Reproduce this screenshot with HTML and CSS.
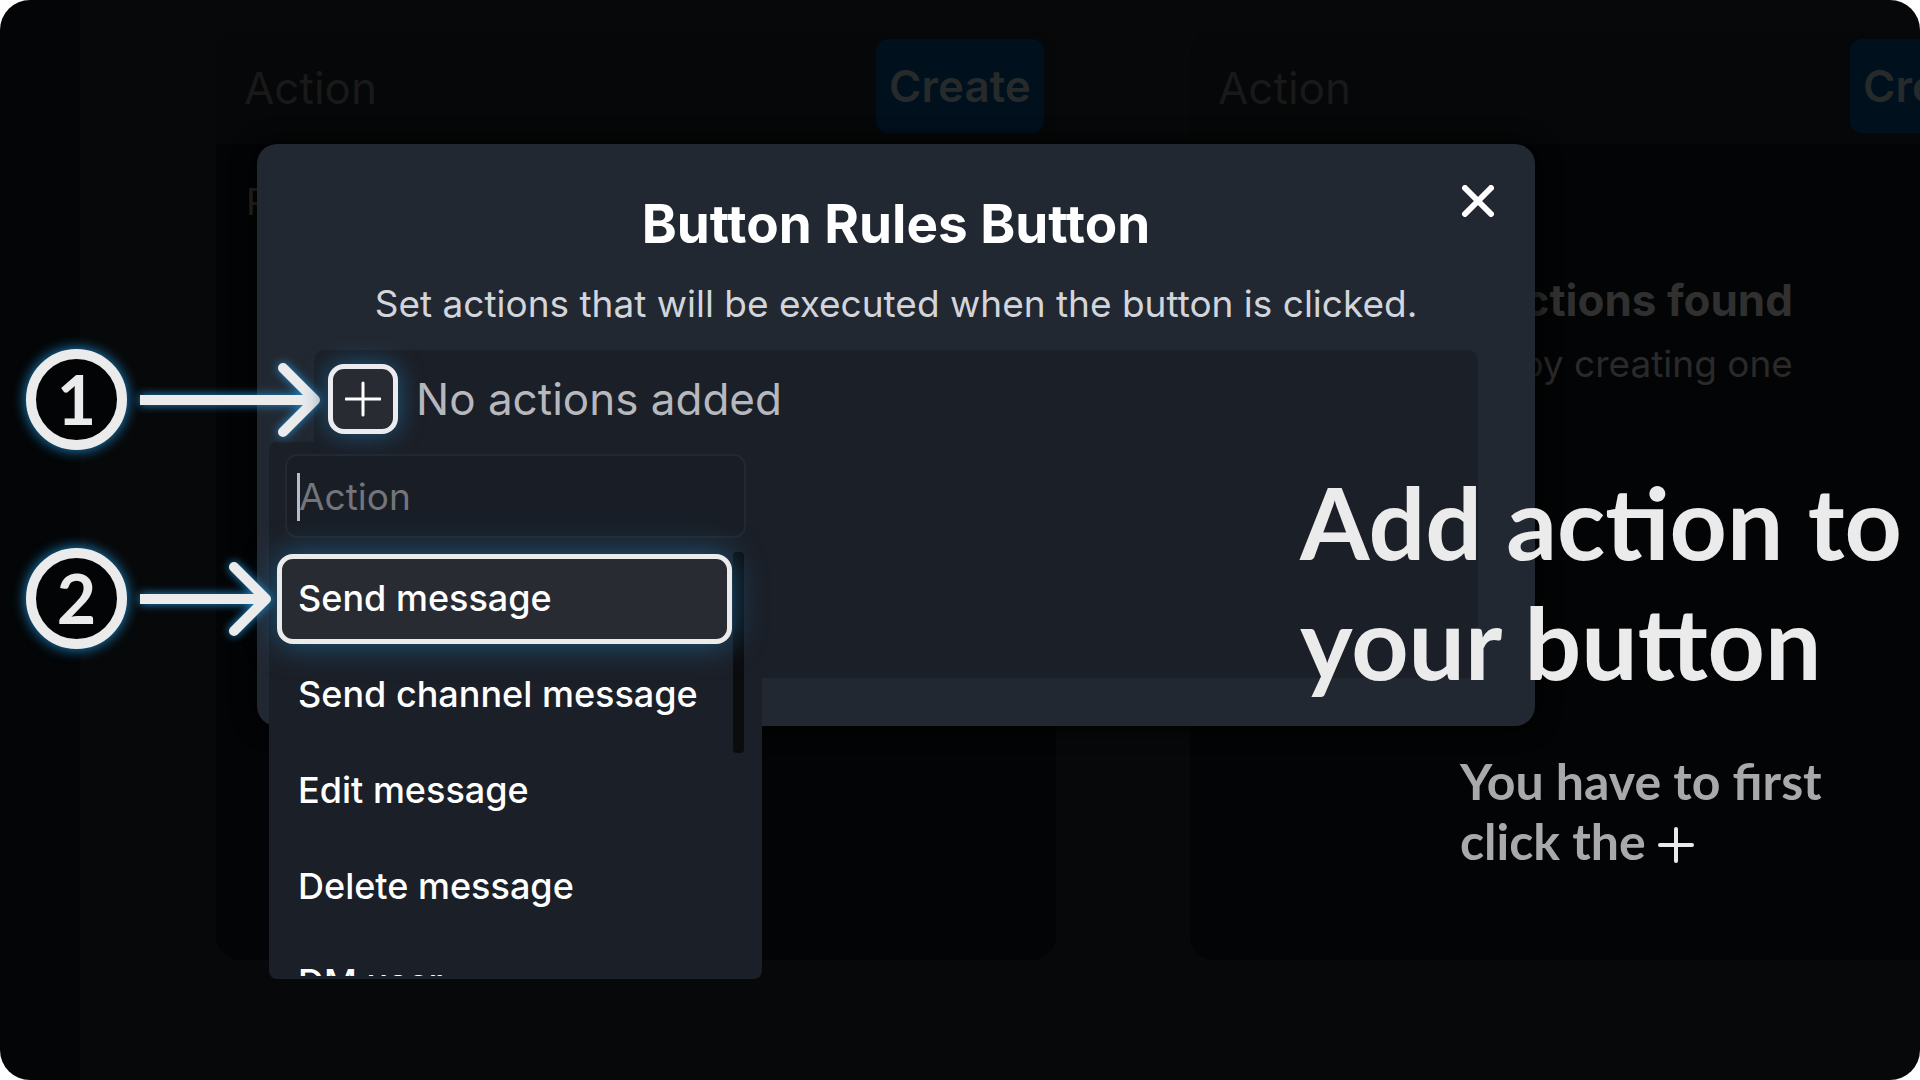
FILE: index.html
```html
<!DOCTYPE html>
<html lang="en">
<head>
    <meta charset="UTF-8">
    <meta name="viewport" content="width=device-width, initial-scale=1.0">
    <title>Add action to your button</title>
    <link rel="stylesheet" href="styles.css">
</head>
<body>
    <div class="stage">
        <!-- dimmed page behind the dialog -->
        <div class="board">
            <section class="card">
                <header class="card-header">
                    <span>Action</span>
                    <button type="button" class="create">Create</button>
                </header>
                <div class="card-body">
                    <p class="rule">P</p>
                </div>
            </section>
            <section class="card">
                <header class="card-header">
                    <span>Action</span>
                    <button type="button" class="create">Create</button>
                </header>
                <div class="card-body empty">
                    <h3>No actions found</h3>
                    <p>Start by creating one</p>
                </div>
            </section>
        </div>

        <div class="overlay">
            <div class="modal" role="dialog" aria-labelledby="modal-title">
                <button type="button" class="close" aria-label="Close">
                    <svg viewBox="0 0 32 32"><path d="M3 3L29 29M29 3L3 29"/></svg>
                </button>
                <h1 id="modal-title">Button Rules Button</h1>
                <p class="subtitle">Set actions that will be executed when the button is clicked.</p>

                <div class="rules">
                    <button type="button" class="add" aria-label="Add action">
                        <svg viewBox="0 0 36 36"><path d="M18 2V34M1 18H35"/></svg>
                    </button>
                    <span>No actions added</span>
                </div>

                <div class="menu">
                    <div class="search">
                        <input type="text" placeholder="Action" aria-label="Action">
                        <span class="caret"></span>
                    </div>
                    <div class="options">
                        <button type="button" class="option selected">Send message</button>
                        <button type="button" class="option">Send channel message</button>
                        <button type="button" class="option">Edit message</button>
                        <button type="button" class="option">Delete message</button>
                        <button type="button" class="option">DM user</button>
                    </div>
                    <span class="thumb"></span>
                </div>
            </div>
        </div>

        <!-- tutorial notes -->
        <div class="step step-one">
            <span class="number">1</span>
            <svg class="arrow" width="182" height="76" viewBox="0 0 182 76">
                <path class="line" d="M0 38H172"/>
                <path d="M143 6L175 38L143 70"/>
            </svg>
        </div>
        <div class="step step-two">
            <span class="number">2</span>
            <svg class="arrow" width="133" height="76" viewBox="0 0 133 76">
                <path class="line" d="M0 38H123"/>
                <path d="M94 6L126 38L94 70"/>
            </svg>
        </div>
        <div class="caption">
            <h2>Add action to<br>your button</h2>
            <p>You have to first<br>click the <svg class="plus" viewBox="0 0 36 36"><path d="M18 2V34M2 18H34"/></svg></p>
        </div>
    </div>
</body>
</html>
```

FILE: styles.css
```css
* {
    margin: 0;
    padding: 0;
    box-sizing: border-box;
}

body {
    font-family: Inter, sans-serif;
    background: #fff;
}

button, input {
    font: inherit;
    color: inherit;
    border: none;
    background: none;
}

svg {
    fill: none;
    stroke: currentColor;
    stroke-linecap: round;
    stroke-linejoin: round;
}

.stage {
    position: relative;
    min-height: 100vh;
    overflow: hidden;
    border-radius: 30px;
    background: linear-gradient(to right, #030506 80px, #070809 81px);
}

/* background page */
.board {
    display: flex;
    gap: 134px;
    padding: 32px 0 0 216px;
}

.card {
    flex: 0 0 840px;
    min-height: 928px;
    border-radius: 24px;
    background: #030405;
    overflow: hidden;
}

.card-header {
    display: flex;
    align-items: flex-start;
    justify-content: space-between;
    height: 112px;
    padding: 7px 12px 0 28px;
    background: #060708;
    color: #191919;
    font-size: 44px;
    line-height: 98px;
}

.create {
    width: 168px;
    height: 94px;
    border-radius: 12px;
    background: #00101c;
    color: #262a2b;
    font-weight: 600;
    line-height: 90px;
}

.card-body {
    padding: 36px 30px;
    color: #2a2a2a;
    font-size: 37px;
}

.rule {
    line-height: 44px;
}

.empty {
    padding-top: 128px;
    text-align: center;
}

.empty h3 {
    margin-bottom: 14px;
    font-size: 44px;
    line-height: 56px;
    color: #303030;
}

.empty p {
    line-height: 44px;
}

/* dialog */
.overlay {
    position: absolute;
    inset: 0;
    padding: 144px 385px 0 257px;
}

.modal {
    position: relative;
    padding: 48px 57px;
    border-radius: 20px;
    background: #222831;
    box-shadow: 0 0 24px #000;
    text-align: center;
    color: #fff;
}

.close {
    position: absolute;
    top: 41px;
    right: 41px;
    width: 32px;
    height: 32px;
}

.close svg {
    display: block;
    stroke-width: 6;
}

.modal h1 {
    margin-bottom: 24px;
    font-size: 53px;
    line-height: 64px;
}

.subtitle {
    margin-bottom: 22px;
    font-size: 37px;
    line-height: 48px;
    color: #d2d5db;
}

.rules {
    display: flex;
    align-items: flex-start;
    gap: 18px;
    height: 328px;
    padding: 14px;
    border-radius: 10px;
    background: #1b1f27;
    color: #b6b8bd;
    font-size: 44px;
    line-height: 70px;
}

.add {
    position: relative;
    z-index: 1;
    width: 70px;
    height: 70px;
    padding: 12px;
    border: 5px solid #ebebf0;
    border-radius: 16px;
    background: #292b32;
    box-shadow: 0 0 24px #1f5a80;
    color: #fff;
}

.add svg {
    display: block;
    stroke-width: 3;
}

.menu {
    position: absolute;
    z-index: 0;
    top: 298px;
    left: 12px;
    width: 493px;
    height: 537px;
    padding: 12px 8px 3px;
    border-radius: 8px;
    background: #1b1f27;
    text-align: left;
    font-size: 36px;
    font-weight: 500;
}

.search {
    position: relative;
    padding: 0 8px 16px;
}

.search input {
    display: block;
    width: 100%;
    height: 84px;
    padding: 0 12px;
    border: 2px solid #24282f;
    border-radius: 12px;
    background: #191e26;
    outline: none;
    font-size: 37px;
    font-weight: 400;
}

.search input::placeholder {
    color: #73757a;
    opacity: 1;
}

.caret {
    position: absolute;
    top: 19px;
    left: 20px;
    width: 3px;
    height: 48px;
    background: #b9bcc4;
}

.options {
    display: flex;
    flex-direction: column;
    gap: 6px;
    width: 455px;
    height: 422px;
    /* cut the last row, leave room for the glow on the other sides */
    clip-path: inset(-40px -40px 0 -40px);
}

.option {
    flex: none;
    height: 90px;
    padding: 0 16px 3px;
    border: 5px solid transparent;
    border-radius: 16px;
    text-align: left;
}

.option.selected {
    border-color: #ebebeb;
    background: #292b32;
    box-shadow: 0 0 32px #1f5a80;
}

.thumb {
    position: absolute;
    z-index: -1;
    top: 110px;
    right: 18px;
    width: 11px;
    height: 201px;
    border-radius: 4px;
    background: #0b0c0e;
}

/* tutorial notes */
.step {
    position: absolute;
    left: 26px;
    display: flex;
    align-items: center;
    gap: 13px;
    color: #ebebeb;
}

.step-one {
    top: 349px;
}

.step-two {
    top: 548px;
}

.number {
    width: 101px;
    height: 101px;
    border: 10px solid #ebebeb;
    border-radius: 50%;
    background: #030405;
    box-shadow: 0 0 14px #1f8fd6;
    text-align: center;
    font: 700 68px/80px Lato, sans-serif;
}

.arrow {
    overflow: visible;
    stroke-width: 10;
    filter: drop-shadow(0 0 5px #1f8fd6);
}

.line {
    stroke-linecap: butt;
}

.caption {
    position: absolute;
    top: 461px;
    right: 0;
    width: 620px;
    font-family: Lato, sans-serif;
    font-weight: 700;
    color: #ebebeb;
}

.caption h2 {
    margin-bottom: 50px;
    font-size: 100px;
    line-height: 120px;
    white-space: nowrap;
}

.caption p {
    padding-left: 160px;
    font-size: 50px;
    line-height: 60px;
    color: #a9a9ab;
}

.plus {
    width: 36px;
    height: 36px;
    stroke-width: 4;
    vertical-align: -3px;
    color: #ebebeb;
}
```
